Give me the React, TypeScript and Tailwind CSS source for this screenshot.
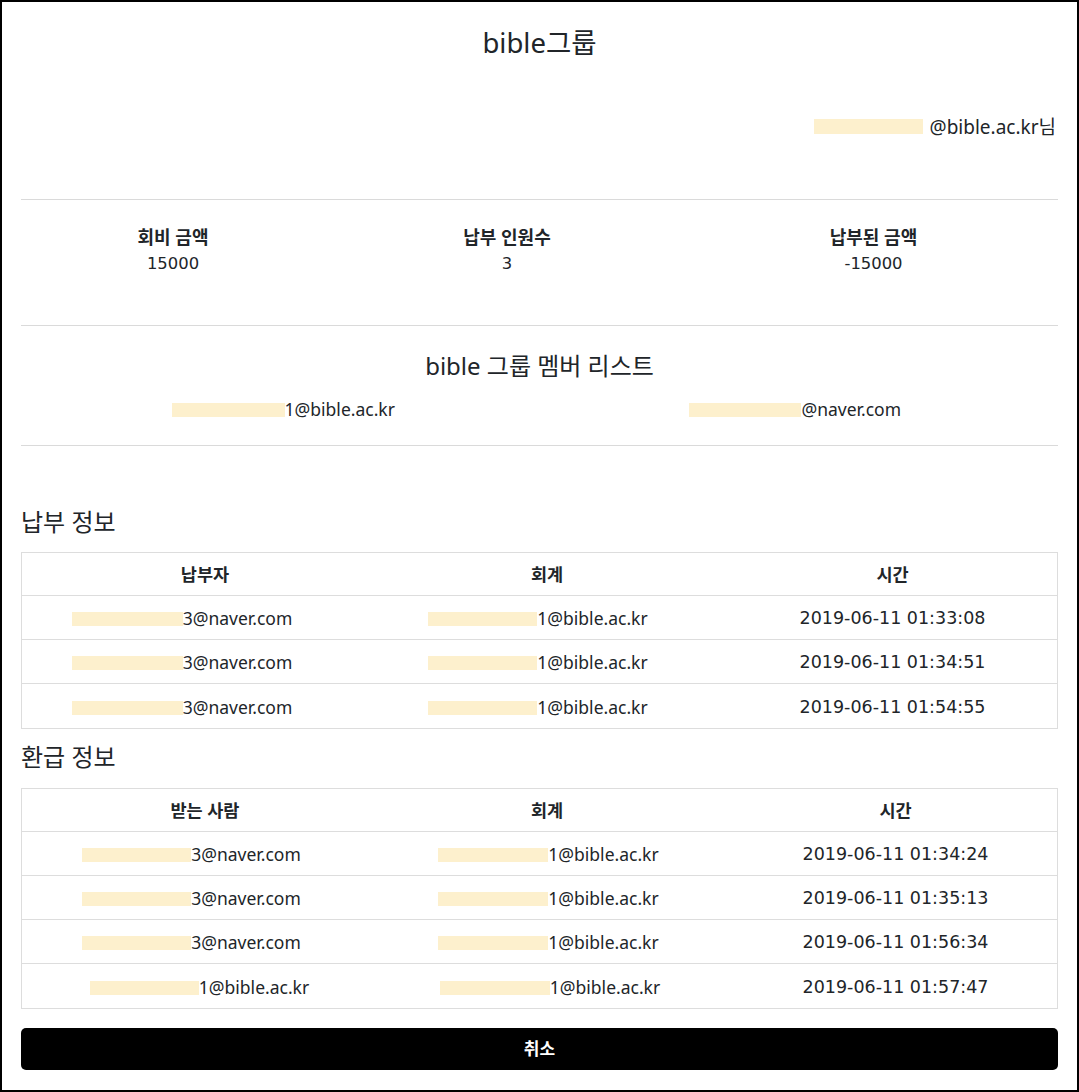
import React from 'react';

type Row = {
  who: string;
  whoBox: string;
  acct: string;
  acctBox: string;
  time: string;
};

const payments: Row[] = [
  { who: '3@naver.com', whoBox: 'w-[111px] ml-[-46px]', acct: '1@bible.ac.kr', acctBox: 'w-[109px] ml-[-18px]', time: '2019-06-11 01:33:08' },
  { who: '3@naver.com', whoBox: 'w-[111px] ml-[-46px]', acct: '1@bible.ac.kr', acctBox: 'w-[109px] ml-[-18px]', time: '2019-06-11 01:34:51' },
  { who: '3@naver.com', whoBox: 'w-[111px] ml-[-46px]', acct: '1@bible.ac.kr', acctBox: 'w-[109px] ml-[-18px]', time: '2019-06-11 01:54:55' },
];

const refunds: Row[] = [
  { who: '3@naver.com', whoBox: 'w-[109px] ml-[-27px]', acct: '1@bible.ac.kr', acctBox: 'w-[110px] ml-[3px]', time: '2019-06-11 01:34:24' },
  { who: '3@naver.com', whoBox: 'w-[109px] ml-[-27px]', acct: '1@bible.ac.kr', acctBox: 'w-[110px] ml-[3px]', time: '2019-06-11 01:35:13' },
  { who: '3@naver.com', whoBox: 'w-[109px] ml-[-27px]', acct: '1@bible.ac.kr', acctBox: 'w-[110px] ml-[3px]', time: '2019-06-11 01:56:34' },
  { who: '1@bible.ac.kr', whoBox: 'w-[109px] ml-[-11px]', acct: '1@bible.ac.kr', acctBox: 'w-[110px] ml-[6px]', time: '2019-06-11 01:57:47' },
];

// masked part of an address: the pale box hides the start of the id
function Masked({ box, text }: { box: string; text: string }) {
  return (
    <span className="inline-flex items-center">
      <span className={`h-[14px] translate-y-[1px] bg-[#fdf0cd] ${box}`} />
      <span>{text}</span>
    </span>
  );
}

function InfoTable({ first, rows, timePad }: { first: string; rows: Row[]; timePad: string }) {
  return (
    <div className="border border-[#dddddd]">
      <div className="grid h-[43px] grid-cols-[366px_318px_1fr] items-center border-b border-[#dddddd] text-center text-[17.5px] font-bold">
        <div>{first}</div>
        <div>회계</div>
        <div className={timePad}>시간</div>
      </div>
      {rows.map((r, i) => (
        <div
          key={i}
          className={`grid h-[44px] grid-cols-[366px_318px_1fr] items-center pt-[2px] text-center text-[17.5px] ${
            i < rows.length - 1 ? 'border-b border-[#dddddd]' : ''
          }`}
        >
          <div>
            <Masked box={r.whoBox} text={r.who} />
          </div>
          <div>
            <Masked box={r.acctBox} text={r.acct} />
          </div>
          <div className={`font-['DejaVu_Sans',sans-serif] text-[17.5px] ${timePad}`}>{r.time}</div>
        </div>
      ))}
    </div>
  );
}

export default function App() {
  return (
    <div className="box-border h-[1092px] w-[1079px] border-2 border-black bg-white px-[19px] pt-[23px] font-['Noto_Sans','Noto_Sans_CJK_KR',sans-serif] text-[#212529]">
      <h1 className="text-center text-[27.5px] leading-[36px]">bible그룹</h1>

      <div className="mt-[52px] flex h-[28px] items-center justify-end pr-[2px] text-[19px]">
        <span className="mr-[7px] h-[15px] w-[109px] translate-y-[-1px] bg-[#fdf0cd]" />
        <span>@bible.ac.kr님</span>
      </div>

      <hr className="mt-[58px] border-t border-[#dadada]" />

      <div className="mt-[25px] grid grid-cols-[304px_364px_1fr] text-center">
        {[
          ['회비 금액', '15000'],
          ['납부 인원수', '3'],
          ['납부된 금액', '-15000'],
        ].map(([label, value]) => (
          <div key={label}>
            <div className="text-[18px] font-bold leading-[24px]">{label}</div>
            <div className="mt-[3px] font-['DejaVu_Sans',sans-serif] text-[16.4px] leading-[24px]">{value}</div>
          </div>
        ))}
      </div>

      <hr className="mt-[49px] border-t border-[#dadada]" />

      <h2 className="mt-[24px] text-center text-[24px] leading-[32px]">bible 그룹 멤버 리스트</h2>
      <div className="mt-[14px] grid grid-cols-2 text-center text-[17.5px] leading-[26px]">
        <div>
          <Masked box="w-[113px] ml-[6px]" text="1@bible.ac.kr" />
        </div>
        <div>
          <Masked box="w-[112px] ml-[-7px]" text="@naver.com" />
        </div>
      </div>

      <hr className="mt-[23px] border-t border-[#dadada]" />

      <h3 className="mt-[60px] text-[24px] leading-[32px]">납부 정보</h3>
      <div className="mt-[14px]">
        <InfoTable first="납부자" rows={payments} timePad="pl-[22px]" />
      </div>

      <h3 className="mt-[12px] text-[24px] leading-[32px]">환급 정보</h3>
      <div className="mt-[15px]">
        <InfoTable first="받는 사람" rows={refunds} timePad="pl-[28px]" />
      </div>

      <button className="mt-[19px] h-[42px] w-full rounded-[5px] bg-black text-[17px] font-bold text-white">
        취소
      </button>
    </div>
  );
}
